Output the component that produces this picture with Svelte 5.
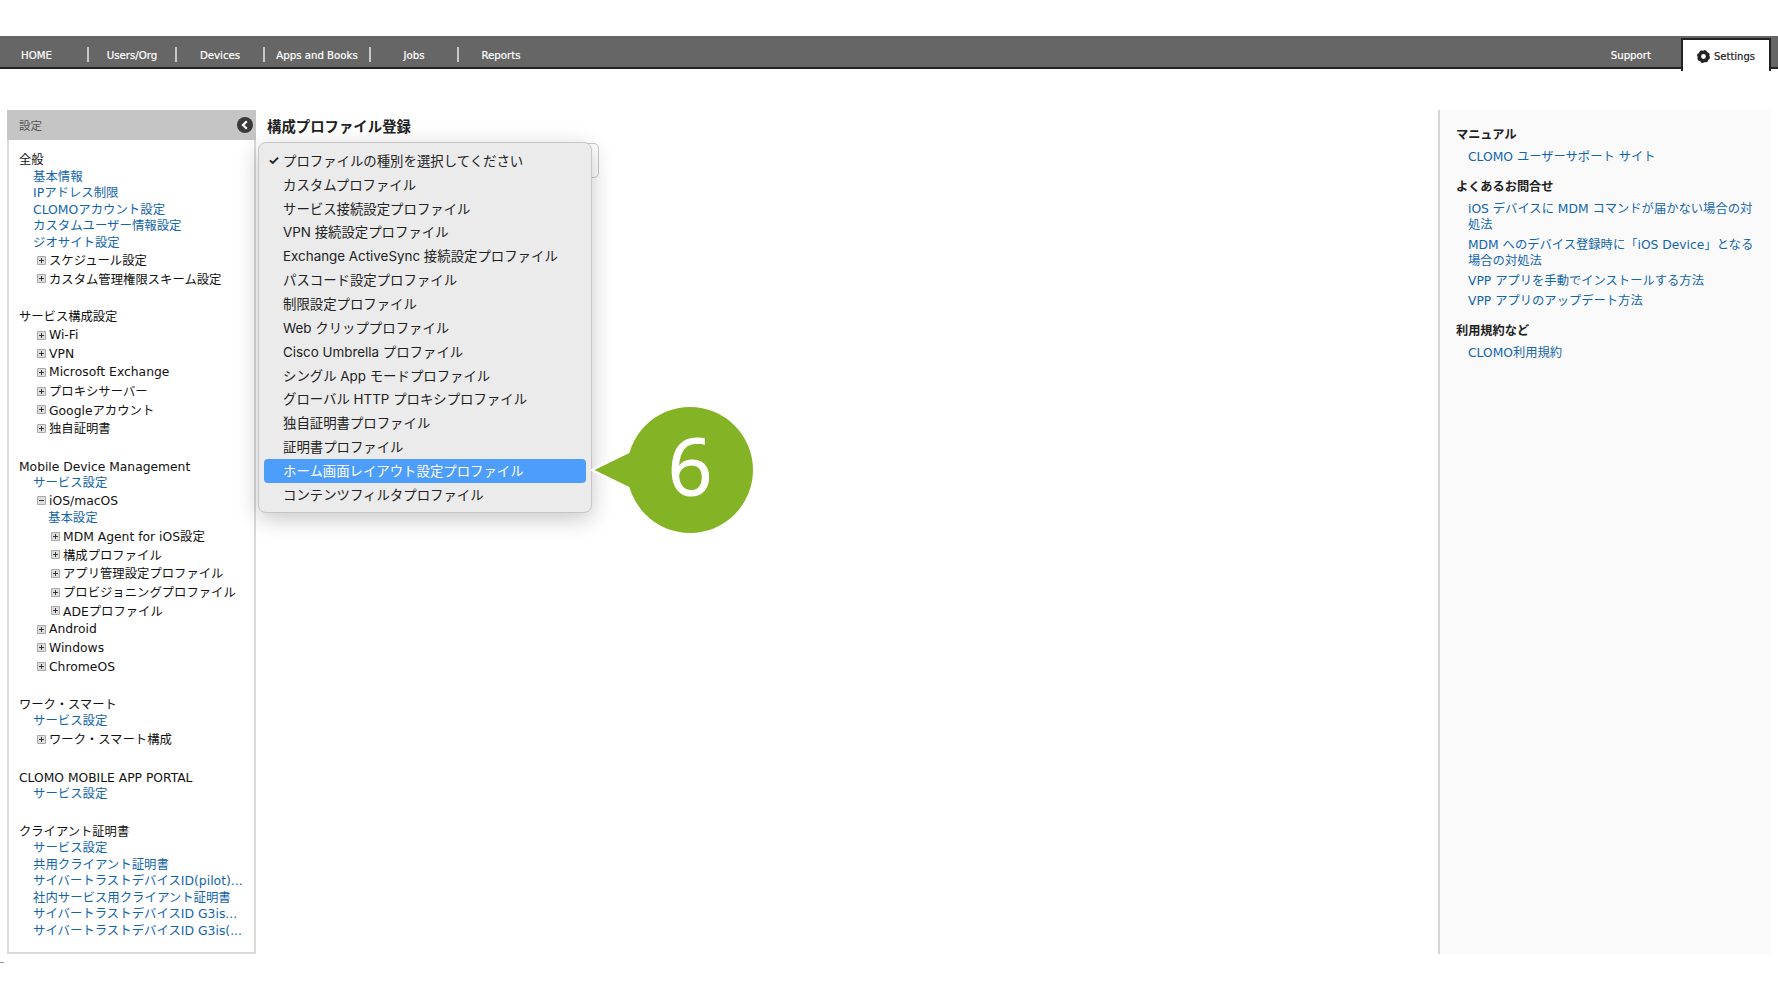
<script>
  const navItems = [
    { label: 'HOME', width: 89, home: true },
    { label: 'Users/Org', width: 88 },
    { label: 'Devices', width: 88 },
    { label: 'Apps and Books', width: 106 },
    { label: 'Jobs', width: 88 },
    { label: 'Reports', width: 86, last: true }
  ];

  // kind: link = blue text, plus / minus = tree row with an expander
  const sections = [
    {
      title: '全般',
      rows: [
        { kind: 'link', text: '基本情報' },
        { kind: 'link', text: 'IPアドレス制限' },
        { kind: 'link', text: 'CLOMOアカウント設定' },
        { kind: 'link', text: 'カスタムユーザー情報設定' },
        { kind: 'link', text: 'ジオサイト設定' },
        { kind: 'plus', text: 'スケジュール設定' },
        { kind: 'plus', text: 'カスタム管理権限スキーム設定' }
      ]
    },
    {
      title: 'サービス構成設定',
      rows: [
        { kind: 'plus', text: 'Wi-Fi' },
        { kind: 'plus', text: 'VPN' },
        { kind: 'plus', text: 'Microsoft Exchange' },
        { kind: 'plus', text: 'プロキシサーバー' },
        { kind: 'plus', text: 'Googleアカウント' },
        { kind: 'plus', text: '独自証明書' }
      ]
    },
    {
      title: 'Mobile Device Management',
      rows: [
        { kind: 'link', text: 'サービス設定' },
        { kind: 'minus', text: 'iOS/macOS' },
        { kind: 'link', text: '基本設定', deep: true },
        { kind: 'plus', text: 'MDM Agent for iOS設定', deep: true },
        { kind: 'plus', text: '構成プロファイル', deep: true },
        { kind: 'plus', text: 'アプリ管理設定プロファイル', deep: true },
        { kind: 'plus', text: 'プロビジョニングプロファイル', deep: true },
        { kind: 'plus', text: 'ADEプロファイル', deep: true },
        { kind: 'plus', text: 'Android' },
        { kind: 'plus', text: 'Windows' },
        { kind: 'plus', text: 'ChromeOS' }
      ]
    },
    {
      title: 'ワーク・スマート',
      rows: [
        { kind: 'link', text: 'サービス設定' },
        { kind: 'plus', text: 'ワーク・スマート構成' }
      ]
    },
    {
      title: 'CLOMO MOBILE APP PORTAL',
      rows: [{ kind: 'link', text: 'サービス設定' }]
    },
    {
      title: 'クライアント証明書',
      rows: [
        { kind: 'link', text: 'サービス設定' },
        { kind: 'link', text: '共用クライアント証明書' },
        { kind: 'link', text: 'サイバートラストデバイスID(pilot)...' },
        { kind: 'link', text: '社内サービス用クライアント証明書' },
        { kind: 'link', text: 'サイバートラストデバイスID G3is...' },
        { kind: 'link', text: 'サイバートラストデバイスID G3is(...' }
      ]
    }
  ];

  const profiles = [
    'プロファイルの種別を選択してください',
    'カスタムプロファイル',
    'サービス接続設定プロファイル',
    'VPN 接続設定プロファイル',
    'Exchange ActiveSync 接続設定プロファイル',
    'パスコード設定プロファイル',
    '制限設定プロファイル',
    'Web クリッププロファイル',
    'Cisco Umbrella プロファイル',
    'シングル App モードプロファイル',
    'グローバル HTTP プロキシプロファイル',
    '独自証明書プロファイル',
    '証明書プロファイル',
    'ホーム画面レイアウト設定プロファイル',
    'コンテンツフィルタプロファイル'
  ];

  const help = [
    { title: 'マニュアル', links: ['CLOMO ユーザーサポート サイト'] },
    {
      title: 'よくあるお問合せ',
      links: [
        'iOS デバイスに MDM コマンドが届かない場合の対処法',
        'MDM へのデバイス登録時に「iOS Device」となる場合の対処法',
        'VPP アプリを手動でインストールする方法',
        'VPP アプリのアップデート方法'
      ]
    },
    { title: '利用規約など', links: ['CLOMO利用規約'] }
  ];
</script>

<div class="page">
  <nav class="topnav">
    {#each navItems as item}
      <a class="navitem" class:home={item.home} class:last={item.last} style="width: {item.width}px">{item.label}</a>
    {/each}
    <div class="spacer"></div>
    <a class="support">Support</a>
    <a class="settings">
      <svg width="13" height="13" viewBox="0 0 13 13">
        <circle cx="6.5" cy="6.5" r="4.2" fill="none" stroke="#222" stroke-width="3.6" />
        <circle cx="6.5" cy="6.5" r="5.6" fill="none" stroke="#222" stroke-width="1.8" stroke-dasharray="2.2 2.2" />
      </svg>
      Settings
    </a>
  </nav>

  <main class="columns">
    <aside class="sidebar">
      <div class="sidehead">
        <span>設定</span>
        <svg width="16" height="16" viewBox="0 0 16 16">
          <circle cx="8" cy="8" r="8" fill="#3a3a3a" />
          <path d="M9.8 4.2 6 8l3.8 3.8" fill="none" stroke="#fff" stroke-width="2.2" />
        </svg>
      </div>
      <div class="sidebody">
        {#each sections as section}
          <section class="group">
            <h3>{section.title}</h3>
            {#each section.rows as row}
              {#if row.kind === 'link'}
                <a class="link" class:deep={row.deep}>{row.text}</a>
              {:else}
                <div class="tree" class:deep={row.deep}>
                  <svg width="9" height="9" viewBox="0 0 9 9">
                    <rect width="9" height="9" rx="1" fill="#a8a8a8" />
                    <rect x="1" y="1" width="7" height="7" fill="#dedede" />
                    <path d={row.kind === 'plus' ? 'M2 4.5h5M4.5 2v5' : 'M2 4.5h5'} stroke="#333" stroke-width="1" />
                  </svg>
                  <span>{row.text}</span>
                </div>
              {/if}
            {/each}
          </section>
        {/each}
      </div>
    </aside>

    <div class="content">
      <h2>構成プロファイル登録</h2>
      <div class="selectwrap">
        <div class="selectbox">
          <svg width="8" height="8" viewBox="0 0 8 8">
            <path d="M1 7 4 2" fill="none" stroke="#555" stroke-width="1.2" />
          </svg>
        </div>
        <ul class="menu">
          {#each profiles as profile, i}
            <li class:active={i === 13}>
              <span class="check">{i === 0 ? '✓' : ''}</span>{profile}
            </li>
          {/each}
        </ul>
      </div>
      <svg class="callout" width="165" height="130" viewBox="0 0 165 130">
        <path d="M42 37 L1 57 L42 77 Z" fill="#85b326" stroke="#fff" stroke-width="2" stroke-linejoin="round" />
        <circle cx="99" cy="57" r="63" fill="#85b326" />
        <text x="99" y="82">6</text>
      </svg>
    </div>

    <aside class="helppanel">
      {#each help as block}
        <section class="helpblock">
          <h4>{block.title}</h4>
          {#each block.links as link}
            <a>{link}</a>
          {/each}
        </section>
      {/each}
    </aside>
  </main>
  <div class="pagefoot"></div>
</div>

<style>
  :global(body) {
    margin: 0;
    background: #fff;
  }

  .page {
    width: 1778px;
    height: 1000px;
    overflow: hidden;
    padding-top: 36px;
    box-sizing: border-box;
    font-family: "DejaVu Sans", "Noto Sans CJK JP", sans-serif;
    font-size: 12px;
    color: #111;
  }

  .topnav {
    display: flex;
    align-items: stretch;
    height: 33px;
    box-sizing: border-box;
    background: #666;
    border-bottom: 2px solid #222;
    color: #fff;
    font-size: 10.2px;
    -webkit-text-stroke: 0.2px;
  }

  .navitem {
    display: flex;
    align-items: center;
    justify-content: center;
    box-sizing: border-box;
    position: relative;
    padding: 7px 2px 0 0;
  }

  .navitem.home {
    justify-content: flex-start;
    padding-left: 21px;
  }

  .navitem::after {
    content: '';
    position: absolute;
    right: 0;
    top: 11px;
    bottom: 5px;
    width: 2px;
    background: #c8c8c8;
  }

  .navitem.last::after {
    display: none;
  }

  .spacer {
    flex: 1;
  }

  .support {
    display: flex;
    align-items: center;
    padding: 7px 30px 0 0;
  }

  .settings {
    display: flex;
    align-items: center;
    gap: 4px;
    box-sizing: border-box;
    width: 90px;
    height: 33px;
    margin: 2px 7px 0 0;
    padding: 2px 0 0 14px;
    background: #fff;
    color: #222;
    border: 2px solid #222;
    border-bottom: none;
    font-size: 10px;
  }

  .columns {
    display: flex;
    align-items: stretch;
    height: 844px;
    margin-top: 41px;
    padding: 0 7px 0 7px;
  }

  .sidebar {
    width: 249px;
    box-sizing: border-box;
    border: 2px solid #dadada;
    border-top: none;
    flex-shrink: 0;
  }

  .sidehead {
    display: flex;
    align-items: center;
    justify-content: space-between;
    height: 30px;
    margin: 0 -2px;
    padding: 0 3px 0 12px;
    background: #c5c5c5;
    color: #555;
    font-size: 11.5px;
  }

  .sidebody {
    padding-top: 12px;
    padding-left: 10px;
  }

  .group {
    display: flex;
    flex-direction: column;
    margin-bottom: 21px;
  }

  .group h3 {
    margin: 0;
    font-size: 12.3px;
    font-weight: 400;
    line-height: 16.5px;
    white-space: nowrap;
  }

  .link {
    display: block;
    padding-left: 14px;
    color: #1265ac;
    font-size: 12.4px;
    line-height: 16.5px;
    white-space: nowrap;
  }

  .link.deep {
    padding-left: 29px;
  }

  .tree {
    display: flex;
    align-items: center;
    gap: 3px;
    height: 18.65px;
    font-size: 12.35px;
    white-space: nowrap;
    box-sizing: border-box;
    padding-left: 18px;
  }

  .tree.deep {
    padding-left: 32px;
  }

  .content {
    flex: 1;
    position: relative;
    padding-left: 10px;
  }

  .content h2 {
    margin: 0;
    padding-top: 6px;
    padding-left: 1px;
    font-family: "Noto Sans CJK JP", sans-serif;
    font-size: 14.4px;
    line-height: 20px;
    font-weight: 700;
    color: #222;
  }

  .selectwrap {
    position: relative;
    padding-top: 7px;
  }

  .selectbox {
    display: flex;
    align-items: center;
    justify-content: flex-end;
    width: 333px;
    height: 35px;
    box-sizing: border-box;
    padding-right: 3px;
    border: 1px solid #c9c9c9;
    border-radius: 5px;
    background: #fff;
  }

  .menu {
    position: absolute;
    top: 6px;
    left: -8px;
    width: 334px;
    height: 371px;
    box-sizing: border-box;
    margin: 0;
    padding: 6px 5px 5px;
    list-style: none;
    background: #ebebeb;
    border: 1px solid #c6c6c6;
    border-radius: 8px;
    box-shadow: 0 6px 22px rgba(0, 0, 0, 0.22);
    font-family: Inter, "Noto Sans CJK JP", sans-serif;
    font-size: 13.4px;
    color: #222;
  }

  .menu li {
    display: flex;
    align-items: center;
    height: 23.85px;
    box-sizing: border-box;
    padding-bottom: 2px;
    white-space: pre;
    border-radius: 4px;
  }

  .menu li.active {
    background: #4d9dfb;
    color: #fff;
  }

  .check {
    width: 19px;
    box-sizing: border-box;
    padding-left: 4px;
    flex-shrink: 0;
    text-align: left;
    font-size: 13px;
    font-weight: 700;
  }

  .callout {
    position: absolute;
    left: 335px;
    top: 303px;
    overflow: visible;
  }

  .callout text {
    font-family: "Open Sans", sans-serif;
    font-size: 78px;
    text-anchor: middle;
    fill: #fff;
    stroke: #fff;
    stroke-width: 1;
  }

  .helppanel {
    width: 333px;
    flex-shrink: 0;
    box-sizing: border-box;
    padding: 14px 12px 0 16px;
    background: #fafafa;
    border-left: 2px solid #d5d5d5;
  }

  .helpblock {
    margin-bottom: 10px;
  }

  .helpblock h4 {
    margin: 0 0 5px;
    font-size: 12.2px;
    line-height: 20px;
    font-family: "Noto Sans CJK JP", sans-serif;
    font-weight: 700;
    color: #222;
  }

  .helpblock a {
    display: block;
    padding-left: 12px;
    margin-bottom: 3.4px;
    color: #1265ac;
    font-size: 12.3px;
    line-height: 16.5px;
  }

  .pagefoot {
    width: 4px;
    height: 1px;
    margin-top: 8px;
    background: #999;
  }
</style>
